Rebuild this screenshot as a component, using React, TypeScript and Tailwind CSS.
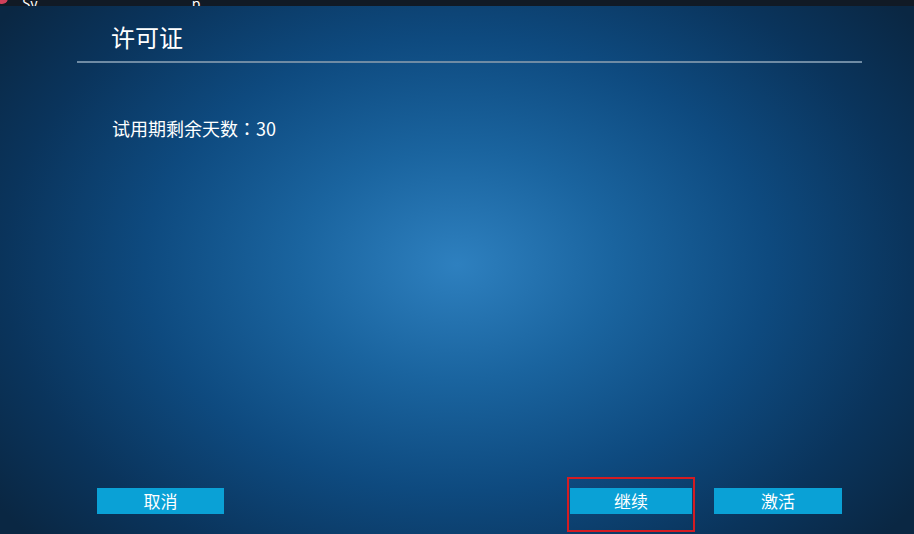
export default function App() {
  const font = { fontFamily: '"Microsoft YaHei", "Noto Sans CJK SC", "Noto Sans", sans-serif' };

  return (
    <div className="flex h-[534px] w-[914px] flex-col overflow-hidden text-white" style={font}>
      {/* window title bar, mostly scrolled out of view */}
      <div className="flex h-[6px] shrink-0 items-end overflow-hidden bg-[#111a25]">
        <div className="flex items-end gap-[14px] pl-0">
          <span className="-ml-[4px] mb-[2px] h-[12px] w-[12px] shrink-0 rounded-full bg-[#d0405a]" />
          <span className="mb-[-6px] text-[14px] leading-[18px] text-white">Sy</span>
          <span className="mb-[-6px] ml-[140px] text-[14px] leading-[18px] text-white">p</span>
        </div>
      </div>

      <div className="flex flex-1 flex-col bg-[radial-gradient(ellipse_62%_78%_at_50%_49%,#2e80bf_0%,#1a649f_28%,#0e4a7f_55%,#0a345c_80%,#0a2743_100%)]">
        <div className="px-[77px]">
          <h1 className="pl-[34px] pt-[14px] text-[24px] leading-[34px] font-normal">许可证</h1>
          <div className="mt-[7px] h-[2px] w-[785px] bg-[#6f8ba4]" />
        </div>

        <p className="pl-[112px] pt-[53px] text-[18px] leading-[24px]">
          试用期剩余天数
          <span style={{ fontFamily: '"Noto Sans CJK JP", sans-serif' }}>：</span>
          30
        </p>

        <div className="flex-1" />

        <div className="flex items-center pb-[20px] pl-[97px]">
          <button className="h-[26px] w-[127px] bg-[#0aa1d6] text-[17px] leading-[26px] text-white">
            取消
          </button>
          <div className="flex-1" />
          <div className="relative">
            <button className="h-[26px] w-[122px] bg-[#0aa1d6] text-[17px] leading-[26px] text-white">
              继续
            </button>
            <div className="pointer-events-none absolute -top-[11px] -left-[3px] h-[55px] w-[128px] border-2 border-[#d41c22]" />
          </div>
          <button className="ml-[22px] mr-[72px] h-[26px] w-[128px] bg-[#0aa1d6] text-[17px] leading-[26px] text-white">
            激活
          </button>
        </div>
      </div>
    </div>
  );
}
